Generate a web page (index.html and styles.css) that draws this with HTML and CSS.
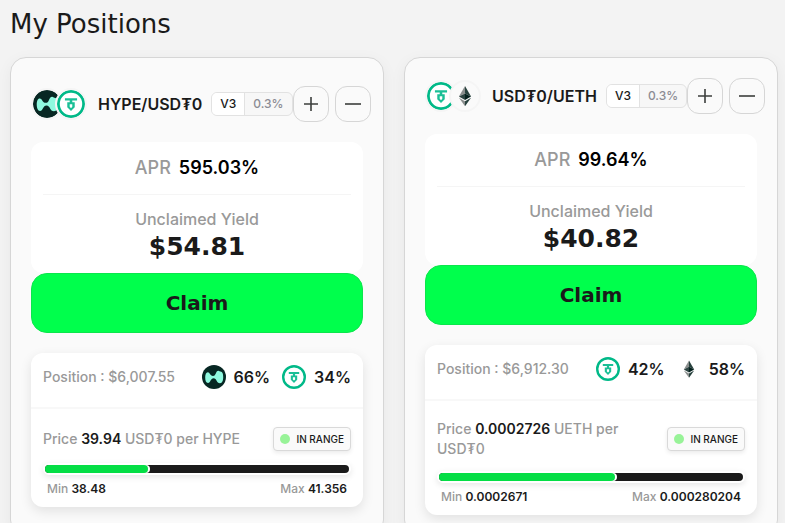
FILE: index.html
```html
<!DOCTYPE html>
<html lang="en">
<head>
    <meta charset="UTF-8">
    <meta name="viewport" content="width=device-width, initial-scale=1.0">
    <title>My Positions</title>
    <link rel="stylesheet" href="styles.css">
</head>
<body>
    <!-- Shared icons -->
    <svg class="sprite" width="0" height="0" aria-hidden="true">
        <symbol id="hype" viewBox="0 0 24 24">
            <circle cx="12" cy="12" r="12" fill="#072723"/>
            <path d="M3.200 12.500c0-2.900.8-5.200 2.600-5.200 2.200 0 2.100 3.700 5.200 3.700 3.300 0 2.400-5.300 5.400-5.300 1.200 0 1.200.9 2.200.9 1.800 0 2.600 2.400 2.600 5.500 0 3.300-.7 6.200-3.200 6.200-3.600 0-3.200-5-6.400-5-3.100 0-3 4.700-5.600 4.700-1.900 0-2.800-2.500-2.800-5.500z" fill="#8ff9df"/>
        </symbol>
        <symbol id="usdt" viewBox="0 0 24 24">
            <circle cx="12" cy="12" r="10.800" fill="#fff" stroke="#00b988" stroke-width="2.400"/>
            <path d="M6.800 7h10.400v2h-4.100v1.500h2.100v4.300L12 18l-3.200-3.200v-4.300h2.100V9H6.800zM10.900 12.200v2.200l1.100 1.200 1.100-1.200v-2.200z" fill="#1abf96" fill-rule="evenodd"/>
        </symbol>
        <symbol id="eth" viewBox="0 0 24 24">
            <path d="M12 3.400v6.400l-5.200 2.600z" fill="#8b8f8e"/>
            <path d="M12 3.400v6.400l5.200 2.600z" fill="#27413d"/>
            <path d="M12 9.800v5.700l-5.200-3.100z" fill="#2c4441"/>
            <path d="M12 9.800v5.700l5.200-3.100z" fill="#04201d"/>
            <path d="M12 16.500v4.300l-5.200-7.200z" fill="#8b8f8e"/>
            <path d="M12 16.500v4.300l5.200-7.200z" fill="#27413d"/>
        </symbol>
        <symbol id="plus" viewBox="0 0 16 16">
            <path d="M8 1v14M1 8h14" stroke="#3c3f3d" stroke-width="1.600"/>
        </symbol>
        <symbol id="minus" viewBox="0 0 16 16">
            <path d="M0 8h16" stroke="#3c3f3d" stroke-width="1.600"/>
        </symbol>
    </svg>

    <h1>My Positions</h1>
    <main class="positions">
        <article class="card">
            <header class="card-header">
                <div class="pair-icons">
                    <svg class="pair-icon"><use href="#hype"/></svg>
                    <svg class="pair-icon"><use href="#usdt"/></svg>
                </div>
                <h2 class="pair-name">HYPE/USD₮0</h2>
                <div class="tags">
                    <span class="tag version">V3</span>
                    <span class="tag fee">0.3%</span>
                </div>
                <div class="actions">
                    <button class="icon-button" aria-label="Add liquidity"><svg><use href="#plus"/></svg></button>
                    <button class="icon-button" aria-label="Remove liquidity"><svg><use href="#minus"/></svg></button>
                </div>
            </header>
            <section class="yield-box">
                <div class="apr"><span class="muted">APR</span><strong>595.03%</strong></div>
                <div class="yield-label">Unclaimed Yield</div>
                <div class="yield-value">$54.81</div>
            </section>
            <button class="claim-button">Claim</button>
            <section class="position-box">
                <div class="position-row">
                    <span class="muted">Position : $6,007.55</span>
                    <div class="shares">
                        <span class="share"><svg><use href="#hype"/></svg>66%</span>
                        <span class="share"><svg><use href="#usdt"/></svg>34%</span>
                    </div>
                </div>
                <div class="range">
                    <div class="price-row">
                        <p class="price">Price <strong>39.94</strong> USD₮0 per HYPE</p>
                        <span class="status"><i class="status-dot"></i>IN RANGE</span>
                    </div>
                    <div class="range-bar">
                        <div class="range-fill" style="width: 34%"></div>
                    </div>
                    <div class="limits">
                        <span>Min <strong>38.48</strong></span>
                        <span>Max <strong>41.356</strong></span>
                    </div>
                </div>
            </section>
        </article>

        <article class="card">
            <header class="card-header">
                <div class="pair-icons">
                    <svg class="pair-icon"><use href="#usdt"/></svg>
                    <svg class="pair-icon"><use href="#eth"/></svg>
                </div>
                <h2 class="pair-name">USD₮0/UETH</h2>
                <div class="tags">
                    <span class="tag version">V3</span>
                    <span class="tag fee">0.3%</span>
                </div>
                <div class="actions">
                    <button class="icon-button" aria-label="Add liquidity"><svg><use href="#plus"/></svg></button>
                    <button class="icon-button" aria-label="Remove liquidity"><svg><use href="#minus"/></svg></button>
                </div>
            </header>
            <section class="yield-box">
                <div class="apr"><span class="muted">APR</span><strong>99.64%</strong></div>
                <div class="yield-label">Unclaimed Yield</div>
                <div class="yield-value">$40.82</div>
            </section>
            <button class="claim-button">Claim</button>
            <section class="position-box">
                <div class="position-row">
                    <span class="muted">Position : $6,912.30</span>
                    <div class="shares">
                        <span class="share"><svg><use href="#usdt"/></svg>42%</span>
                        <span class="share"><svg><use href="#eth"/></svg>58%</span>
                    </div>
                </div>
                <div class="range">
                    <div class="price-row">
                        <p class="price">Price <strong>0.0002726</strong> UETH per USD₮0</p>
                        <span class="status"><i class="status-dot"></i>IN RANGE</span>
                    </div>
                    <div class="range-bar">
                        <div class="range-fill" style="width: 58%"></div>
                    </div>
                    <div class="limits">
                        <span>Min <strong>0.0002671</strong></span>
                        <span>Max <strong>0.000280204</strong></span>
                    </div>
                </div>
            </section>
        </article>
    </main>
</body>
</html>
```
FILE: styles.css
```css
* {
    margin: 0;
    padding: 0;
    box-sizing: border-box;
}

body {
    padding: 10px 7px 20px 10px;
    background: #f3f3f3;
    color: #1a1a1a;
    font-family: Inter, "Liberation Sans", sans-serif;
    font-size: 14px;
    font-weight: 500;
    line-height: 20px;
}

button {
    font: inherit;
    color: inherit;
    cursor: pointer;
}

strong {
    font-weight: 600;
}

.sprite {
    position: absolute;
}

h1 {
    margin-bottom: 19px;
    font-family: "DejaVu Sans", sans-serif;
    font-size: 26px;
    font-weight: 500;
    line-height: 28px;
}

.muted {
    color: #999;
}

.positions {
    display: grid;
    grid-template-columns: repeat(auto-fit, minmax(340px, 1fr));
    gap: 20px;
}

.card {
    display: flex;
    flex-direction: column;
    justify-content: center;
    padding: 20px;
    background: #fafafa;
    border: 1px solid #d6d6d6;
    border-radius: 16px;
    box-shadow: 0 4px 16px rgba(0, 0, 0, 0.05);
}

/* Header */
.card-header {
    display: flex;
    align-items: center;
    margin: 0 -8px 20px 0;
}

.pair-icons {
    display: flex;
    margin-right: 11px;
}

.pair-icon {
    width: 32px;
    height: 32px;
    border: 2px solid #f5f5f5;
    border-radius: 50%;
    background: #fafafa;
}

.pair-icon + .pair-icon {
    margin-left: -8px;
}

.pair-name {
    margin-right: 9px;
    font-size: 16px;
    font-weight: 600;
    white-space: nowrap;
}

.tags {
    display: flex;
    border: 1px solid #e2e2e2;
    border-radius: 6px;
    background: #f7f7f7;
    overflow: hidden;
    font-size: 12px;
    line-height: 22px;
}

.tag {
    padding: 0 8px;
}

.version {
    background: #fff;
    border-right: 1px solid #e2e2e2;
}

.fee {
    color: #8c8c94;
}

.actions {
    display: flex;
    gap: 6px;
    margin-left: auto;
}

.icon-button {
    display: grid;
    place-items: center;
    width: 36px;
    height: 36px;
    background: #fafafa;
    border: 1px solid #d6d6d6;
    border-radius: 12px;
}

.icon-button svg {
    width: 16px;
    height: 16px;
}

/* Yield */
.yield-box {
    padding: 0 12px 10px;
    background: #fff;
    border-radius: 12px;
    text-align: center;
}

.apr {
    display: flex;
    justify-content: center;
    gap: 8px;
    margin-bottom: 12px;
    padding: 12px 0;
    border-bottom: 1px solid #f5f5f5;
    font-size: 18px;
    line-height: 28px;
}

.apr strong {
    color: #000;
}

.yield-label {
    color: #999;
    font-size: 16px;
    line-height: 24px;
}

.yield-value {
    font-family: "DejaVu Sans", sans-serif;
    font-size: 25px;
    font-weight: 700;
    line-height: 32px;
}

.claim-button {
    height: 60px;
    margin-bottom: 20px;
    background: #00ff4c;
    border: 1px solid #0be64c;
    border-radius: 16px;
    font-family: "DejaVu Sans", sans-serif;
    font-size: 20px;
    font-weight: 700;
}

/* Position details */
.position-box {
    background: #fff;
    border-radius: 12px;
    box-shadow: 0 4px 12px rgba(0, 0, 0, 0.1);
}

.position-row {
    display: flex;
    align-items: center;
    justify-content: space-between;
    padding: 12px 12px 18px;
    border-bottom: 2px solid #f8f8f8;
}

.shares {
    display: flex;
    gap: 12px;
}

.share {
    display: flex;
    align-items: center;
    gap: 8px;
    font-size: 16px;
    font-weight: 600;
}

.share svg {
    width: 24px;
    height: 24px;
}

.range {
    padding: 18px 12px 10px;
}

.price-row {
    display: flex;
    align-items: center;
    justify-content: space-between;
    gap: 12px;
    margin-bottom: 12px;
}

.price {
    color: #999;
}

.price strong,
.limits strong {
    color: #1a1a1a;
}

.status {
    display: flex;
    align-items: center;
    gap: 6px;
    padding: 0 6px;
    background: #fafafa;
    border: 1px solid #d9d9d9;
    border-radius: 4px;
    box-shadow: 0 2px 4px rgba(0, 0, 0, 0.08);
    font-size: 10px;
    line-height: 22px;
    white-space: nowrap;
}

.status-dot {
    width: 10px;
    height: 10px;
    border-radius: 50%;
    background: #98f398;
}

.range-bar {
    height: 12px;
    margin-bottom: 6px;
    background: #1a1a1a;
    border: 2px solid #fff;
    border-radius: 6px;
    box-shadow: 0 2px 6px rgba(0, 0, 0, 0.1);
}

.range-fill {
    height: 8px;
    background: #04de45;
    border-radius: 4px;
    box-shadow: 2px 0 0 #fff;
}

.limits {
    display: flex;
    justify-content: space-between;
    padding: 0 4px;
    color: #999;
    font-size: 12px;
    line-height: 16px;
}

@media (max-width: 480px) {
    .card {
        padding: 12px;
    }

    .card-header {
        flex-wrap: wrap;
        margin-right: 0;
    }
}
```
